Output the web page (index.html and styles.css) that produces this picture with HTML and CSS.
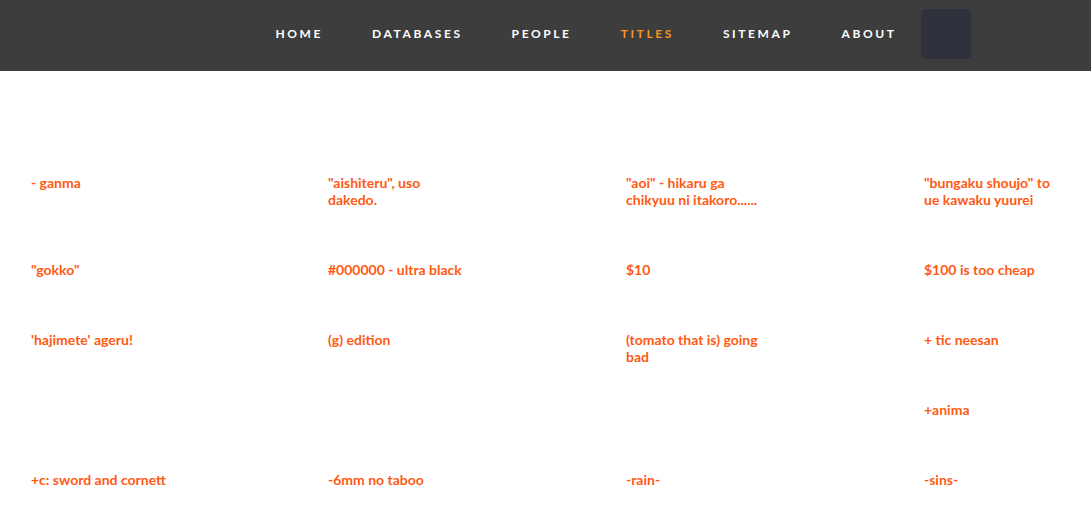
FILE: index.html
```html
<!DOCTYPE html>
<html lang="en">
<head>
<meta charset="utf-8">
<title>Titles</title>
<link rel="stylesheet" href="styles.css">
</head>
<body>
<header class="topbar">
  <nav class="nav">
    <a class="nav-link" href="#">Home</a>
    <a class="nav-link" href="#">Databases</a>
    <a class="nav-link" href="#">People</a>
    <a class="nav-link is-active" href="#">Titles</a>
    <a class="nav-link" href="#">Sitemap</a>
    <a class="nav-link" href="#">About</a>
    <button class="nav-square" type="button" aria-label="Menu"></button>
  </nav>
</header>
<main class="titles">
  <a class="title" href="#">- ganma</a>
  <a class="title" href="#">"aishiteru", uso dakedo.</a>
  <a class="title" href="#">"aoi" - hikaru ga chikyuu ni itakoro......</a>
  <a class="title" href="#">"bungaku shoujo" to ue kawaku yuurei</a>
  <a class="title" href="#">"gokko"</a>
  <a class="title" href="#">#000000 - ultra black</a>
  <a class="title" href="#">$10</a>
  <a class="title" href="#">$100 is too cheap</a>
  <a class="title" href="#">'hajimete' ageru!</a>
  <a class="title" href="#">(g) edition</a>
  <a class="title" href="#">(tomato that is) going bad</a>
  <a class="title" href="#">+ tic neesan</a>
  <a class="title col-4" href="#">+anima</a>
  <a class="title" href="#">+c: sword and cornett</a>
  <a class="title" href="#">-6mm no taboo</a>
  <a class="title" href="#">-rain-</a>
  <a class="title" href="#">-sins-</a>
</main>
</body>
</html>
```
FILE: styles.css
```css
html, body {
  margin: 0;
  padding: 0;
  background: #ffffff;
  font-family: "Lato", "Liberation Sans", sans-serif;
}

.topbar {
  height: 71px;
  background: #3d3d3d;
}

.nav {
  box-sizing: border-box;
  height: 100%;
  display: flex;
  align-items: center;
  justify-content: flex-end;
  padding: 0 120px 4px 0;
}

.nav-link {
  padding: 0 24.5px;
  color: #ffffff;
  text-decoration: none;
  text-transform: uppercase;
  font-size: 12px;
  font-weight: 700;
  letter-spacing: 2.6px;
  line-height: 20px;
}

.nav-link.is-active {
  color: #f7931e;
}

.nav-square {
  width: 50px;
  height: 50px;
  border: 0;
  border-radius: 5px;
  background: #2e313c;
  padding: 0;
}

.titles {
  display: grid;
  grid-template-columns: 297px 298px 298px 1fr;
  grid-template-rows: 34px 17px 17px 17px 17px;
  row-gap: 53px;
  align-items: start;
  padding: 103px 0 40px 31px;
}

.title {
  max-width: 140px;
  color: #ff5a14;
  text-decoration: none;
  font-size: 14px;
  font-weight: 700;
  line-height: 17px;
}

.col-4 {
  grid-column: 4;
}
```
